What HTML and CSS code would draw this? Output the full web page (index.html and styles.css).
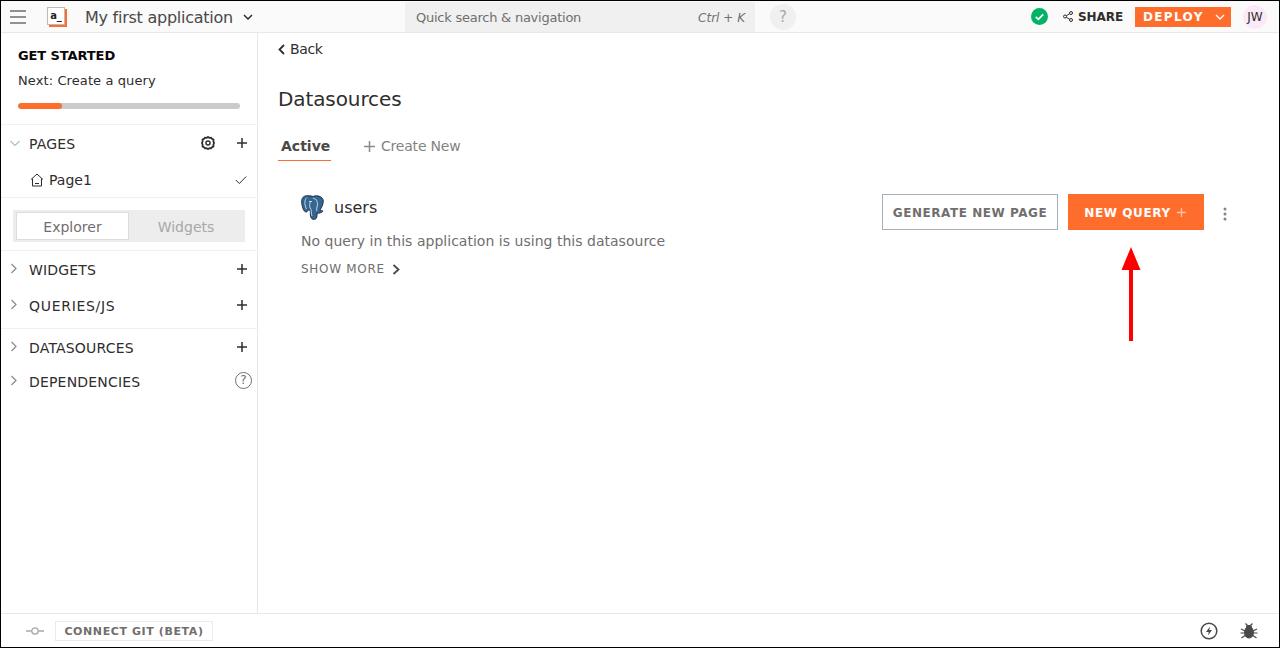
FILE: index.html
```html
<!DOCTYPE html>
<html lang="en">
<head>
<meta charset="utf-8">
<title>Datasources</title>
<link rel="stylesheet" href="styles.css">
</head>
<body>
<div class="frame">
  <header class="topbar">
    <div class="top-left">
      <svg class="burger" width="16" height="14" viewBox="0 0 16 14"><path d="M0 1h16M0 7h16M0 13h16" stroke="#716e6e" stroke-width="1.5" fill="none"/></svg>
      <span class="logo"><span class="logo-box">a_</span></span>
      <span class="app-name">My first application</span>
      <svg class="app-caret" width="10" height="6" viewBox="0 0 10 6"><path d="M1 1l4 4 4-4" stroke="#302d2d" stroke-width="1.5" fill="none"/></svg>
    </div>
    <div class="search"><span>Quick search &amp; navigation</span><em>Ctrl + K</em></div>
    <div class="help">?</div>
    <div class="top-right">
      <svg class="status" width="17" height="17" viewBox="0 0 17 17"><circle cx="8.5" cy="8.5" r="8.5" fill="#03b365"/><path d="M4.8 8.8l2.6 2.5 4.8-5" stroke="#fff" stroke-width="1.8" fill="none"/></svg>
      <svg class="share-icon" width="10" height="11" viewBox="0 0 10 11"><g fill="none" stroke="#302d2d" stroke-width="1"><circle cx="2" cy="5.5" r="1.5"/><circle cx="8" cy="2" r="1.5"/><circle cx="8" cy="9" r="1.5"/><path d="M3.3 4.7l3.4-2M3.3 6.3l3.4 2"/></g></svg>
      <span class="share">SHARE</span>
      <div class="deploy"><span>DEPLOY</span><svg width="10" height="6" viewBox="0 0 10 6"><path d="M1 1l4 4 4-4" stroke="#fff" stroke-width="1.3" fill="none"/></svg></div>
      <div class="avatar">JW</div>
    </div>
  </header>
  <div class="middle">
    <aside class="sidebar">
      <section class="started">
        <div class="started-title">GET STARTED</div>
        <div class="started-next">Next: Create a query</div>
        <div class="progress"><div class="progress-fill"></div></div>
      </section>
      <section class="group pages-group">
        <div class="row pages-row">
          <svg class="caret" width="12" height="12" viewBox="0 0 12 12"><path d="M1.5 4l4.5 4.5L10.500 4" stroke="#8a8a8a" stroke-width="1" fill="none"/></svg>
          <span class="row-label">PAGES</span>
          <svg class="gear" width="14" height="14" viewBox="0 0 14 14"><path d="M7 1l1.400.8 1.600-.2 1 1.300 1.500.7-.2 1.600.7 1.800-.7 1.800.2 1.600-1.500.7-1 1.300-1.600-.2L7 13l-1.400-.8-1.600.2-1-1.300-1.500-.7.2-1.600L1 7l.7-1.800-.2-1.600 1.500-.7 1-1.300 1.600.2z" fill="none" stroke="#302d2d" stroke-width="1.800"/><circle cx="7" cy="7" r="2" fill="none" stroke="#302d2d" stroke-width="1.500"/></svg>
          <svg class="plus" width="10" height="10" viewBox="0 0 10 10"><path d="M5 0v10M0 5h10" stroke="#302d2d" stroke-width="1.500"/></svg>
        </div>
        <div class="row page-row">
          <svg class="home" width="14" height="14" viewBox="0 0 14 14"><path d="M1 6.500L7 1l6 5.500M2.500 5.500V13h9V5.500M5 10.500h4" fill="none" stroke="#302d2d" stroke-width="1"/></svg>
          <span class="row-label">Page1</span>
          <svg class="check" width="12" height="10" viewBox="0 0 12 10"><path d="M.8 5l3.500 3.500L11.200 1.500" stroke="#302d2d" stroke-width="1" fill="none"/></svg>
        </div>
      </section>
      <section class="switch-wrap">
        <div class="switch">
          <div class="switch-tab on">Explorer</div>
          <div class="switch-tab">Widgets</div>
        </div>
      </section>
      <section class="group tree-a">
        <div class="row tree-row">
          <svg class="caret" width="12" height="12" viewBox="0 0 12 12"><path d="M3.500 1L8 5.500 3.500 10" stroke="#8a8a8a" stroke-width="1.200" fill="none"/></svg>
          <span class="row-label">WIDGETS</span>
          <svg class="plus" width="10" height="10" viewBox="0 0 10 10"><path d="M5 0v10M0 5h10" stroke="#302d2d" stroke-width="1.500"/></svg>
        </div>
        <div class="row tree-row">
          <svg class="caret" width="12" height="12" viewBox="0 0 12 12"><path d="M3.500 1L8 5.500 3.500 10" stroke="#8a8a8a" stroke-width="1.200" fill="none"/></svg>
          <span class="row-label label-wide">QUERIES/JS</span>
          <svg class="plus" width="10" height="10" viewBox="0 0 10 10"><path d="M5 0v10M0 5h10" stroke="#302d2d" stroke-width="1.500"/></svg>
        </div>
      </section>
      <section class="tree-b">
        <div class="row tree-row">
          <svg class="caret" width="12" height="12" viewBox="0 0 12 12"><path d="M3.500 1L8 5.500 3.500 10" stroke="#8a8a8a" stroke-width="1.200" fill="none"/></svg>
          <span class="row-label">DATASOURCES</span>
          <svg class="plus" width="10" height="10" viewBox="0 0 10 10"><path d="M5 0v10M0 5h10" stroke="#302d2d" stroke-width="1.500"/></svg>
        </div>
        <div class="row tree-row dep-row">
          <svg class="caret" width="12" height="12" viewBox="0 0 12 12"><path d="M3.500 1L8 5.500 3.500 10" stroke="#8a8a8a" stroke-width="1.200" fill="none"/></svg>
          <span class="row-label">DEPENDENCIES</span>
          <span class="qmark">?</span>
        </div>
      </section>
    </aside>
    <main class="content">
      <div class="back"><svg width="7" height="11" viewBox="0 0 7 11"><path d="M6 1L1.500 5.500 6 10" stroke="#302d2d" stroke-width="1.800" fill="none"/></svg><span>Back</span></div>
      <h1 class="title">Datasources</h1>
      <div class="tabs">
        <div class="tab-active">Active</div>
        <div class="tab-new"><svg width="11" height="11" viewBox="0 0 11 11"><path d="M5.500 0v11M0 5.500h11" stroke="#8a8a8a" stroke-width="1.500"/></svg><span>Create New</span></div>
      </div>
      <div class="card">
        <div class="card-info">
          <div class="card-head">
            <svg class="pg" width="24" height="25" viewBox="0 0 24 25">
              <path d="M6 .8C2.300.8.500 3.300.7 7c.2 3.800 1.500 8.800 3.600 9.800 1.500.7 2.500-.8 3.300-2 .6.500 1.200.8 1.800.8-.2 2.700-.2 5.800.8 7.400.8 1.300 2.800 1.700 4.300 1 1.300-.7 1.600-2.700 1.600-5.700 1.500.2 3.700-.5 5.200-1.500.8-.7.3-1.500-1-1.200-.5 0-1 0-1.500-.2 1.600-2.500 3.500-6.100 3.500-9.200C22.300 3 19 .8 15.500.8c-1.500 0-2.500.2-3.500.7C10.500.8 8 .8 6 .8z" fill="#336791" stroke="#1f3244" stroke-width="1"/>
              <path d="M9.500 6c-1 3-1.500 6 .5 8.500.5 2 .2 5 1 6.500M14.500 4c2 2 2.500 5 1.500 8-.5 1.500-.3 3-.3 4M6 2.500C3.500 4.500 3 9 5.500 14M8 6.500h3M12 3c1 .5 2 1 2.500 1" fill="none" stroke="#e8eef3" stroke-width=".8"/>
            </svg>
            <span class="ds-name">users</span>
          </div>
          <div class="ds-desc">No query in this application is using this datasource</div>
          <div class="show-more"><span>SHOW MORE</span><svg width="8" height="11" viewBox="0 0 8 11"><path d="M1.500 1L6.500 5.500 1.500 10" stroke="#4b4848" stroke-width="1.800" fill="none"/></svg></div>
        </div>
        <div class="card-actions">
          <div class="btn-outline">GENERATE NEW PAGE</div>
          <div class="btn-primary"><span>NEW QUERY</span><svg width="9" height="9" viewBox="0 0 9 9"><path d="M4.500 0v9M0 4.500h9" stroke="#fbc4a8" stroke-width="1.300"/></svg></div>
          <svg class="kebab" width="4" height="14" viewBox="0 0 4 14"><circle cx="2" cy="2" r="1.500" fill="#858282"/><circle cx="2" cy="7" r="1.500" fill="#858282"/><circle cx="2" cy="12" r="1.500" fill="#858282"/></svg>
        </div>
      </div>
      <svg class="arrow" width="20" height="94" viewBox="0 0 20 94"><path d="M10 0l9.500 23H12V94H8V23H.5z" fill="#fe0000"/></svg>
    </main>
  </div>
  <footer class="bottombar">
    <svg class="git" width="18" height="8" viewBox="0 0 18 8"><path d="M0 4h5.500M12.500 4H18" stroke="#a9a7a7" stroke-width="1.500"/><circle cx="9" cy="4" r="3.200" fill="none" stroke="#a9a7a7" stroke-width="1.300"/></svg>
    <div class="connect">CONNECT GIT (BETA)</div>
    <div class="bottom-right">
      <svg width="18" height="18" viewBox="0 0 18 18"><circle cx="9" cy="9" r="7.800" fill="none" stroke="#4b4848" stroke-width="1.500"/><path d="M10 4.500L6 10h2.700L8 13.500 12 8H9.300z" fill="#4b4848"/></svg>
      <svg width="18" height="18" viewBox="0 0 18 18"><ellipse cx="9" cy="10.500" rx="5" ry="6" fill="#4b4848"/><path d="M6 4.500C6 2.500 12 2.500 12 4.500V6H6z" fill="#4b4848"/><path d="M1 7l4 2M17 7l-4 2M.5 11h4M17.500 11h-4M1.500 16l3.500-2.500M16.500 16L13 13.500M5.500 1.500l2 2M12.500 1.500l-2 2" stroke="#4b4848" stroke-width="1.200"/></svg>
    </div>
  </footer>
</div>
</body>
</html>
```
FILE: styles.css
```css
* { box-sizing: border-box; }
html, body { margin: 0; height: 100%; }
body { font-family: "DejaVu Sans", sans-serif; color: #302d2d; background: #fff; overflow: hidden; }
.frame { width: 1280px; height: 648px; border: 1px solid #000; display: flex; flex-direction: column; }

.topbar { height: 32px; flex: none; background: #fafafa; border-bottom: 1px solid #e8e8e8; display: flex; align-items: center; position: relative; }
.top-left { width: 404px; flex: none; display: flex; align-items: center; padding-left: 9px; }
.logo { width: 20px; height: 20px; margin-left: 21px; display: block; background: linear-gradient(#ff6d2d, #ff6d2d) no-repeat 2px 2px / 18px 18px; }
.logo-box { display: block; width: 18px; height: 18px; background: #fff; border: 1px solid #bbb; font-size: 10px; font-weight: 700; line-height: 15px; text-align: center; color: #222; }
.app-name { margin-left: 18px; padding-top: 1px; font-size: 16px; letter-spacing: -.25px; color: #4b4848; white-space: nowrap; }
.app-caret { margin-left: 10px; }
.search { width: 350px; height: 30px; flex: none; background: #f0f0f0; display: flex; align-items: center; justify-content: space-between; padding: 2px 10px 0 11px; font-size: 13px; letter-spacing: -.24px; color: #716e6e; }
.search em { font-size: 12px; letter-spacing: 0; }
.help { width: 26px; height: 26px; margin-left: 15px; flex: none; border-radius: 50%; background: #f0f0f0; color: #a9a7a7; font-size: 15px; text-align: center; line-height: 26px; }
.top-right { margin-left: auto; display: flex; align-items: center; }
.share-icon { margin-left: 15px; }
.share { margin-left: 5px; padding-top: 1px; font-size: 12px; font-weight: 700; color: #302d2d; letter-spacing: -.1px; }
.deploy { margin-left: 12px; width: 96px; height: 20px; background: #ff6d2d; color: #fff; display: flex; align-items: center; justify-content: space-between; padding: 1px 6px 0 8px; font-size: 12px; font-weight: 700; letter-spacing: 1.350px; }
.avatar { width: 24px; height: 24px; margin: 0 12px 0 12px; border-radius: 50%; background: #fbe9f9; color: #302d2d; font-size: 12px; text-align: center; line-height: 24px; }

.middle { flex: 1; display: flex; min-height: 0; }
.sidebar { width: 257px; flex: none; border-right: 1px solid #e8e8e8; display: flex; flex-direction: column; }
.started { height: 92px; padding: 15px 17px 0; border-bottom: 1px solid #f0f0f0; }
.started-title { font-size: 13px; font-weight: 700; letter-spacing: -.1px; color: #090707; line-height: 16px; }
.started-next { font-size: 13px; letter-spacing: .1px; margin-top: 9px; line-height: 16px; color: #302d2d; }
.progress { width: 222px; height: 6px; border-radius: 3px; background: #cbcbcb; margin-top: 14px; overflow: hidden; }
.progress-fill { width: 44px; height: 100%; border-radius: 3px; background: #ff6d2d; }

.group { border-bottom: 1px solid #f0f0f0; }
.row { display: flex; align-items: center; padding: 0 10px 0 8px; }
.row-label { font-size: 14px; letter-spacing: .18px; color: #302d2d; white-space: nowrap; }
.label-wide { letter-spacing: .7px; }
.page-row .row-label { letter-spacing: 0; }
.caret { flex: none; margin-top: -2px; }
.tree-row .caret { margin-left: -1px; margin-right: 1px; }
.pages-group { height: 73px; padding-top: 1px; }
.pages-row { height: 36px; }
.pages-row .row-label, .tree-row .row-label { margin-left: 8px; }
.gear { margin-left: auto; margin-right: 22px; margin-top: -2px; }
.plus { flex: none; margin-left: auto; margin-top: -2px; }
.gear + .plus { margin-left: 0; }
.page-row { height: 36px; padding-left: 29px; }
.page-row .row-label { margin-left: 5px; }
.check { margin-left: auto; margin-right: 0; }

.switch-wrap { height: 53px; padding: 12px 12px 0 12px; border-bottom: 1px solid #f0f0f0; flex: none; }
.switch { display: flex; width: 232px; height: 32px; background: #ededed; padding: 2px 2px 2px 3px; }
.switch-tab { flex: 1; display: flex; align-items: center; justify-content: center; font-size: 14px; color: #a9a7a7; padding-top: 1px; }
.switch-tab.on { flex: none; width: 113px; background: #fff; border: 1px solid #dcdcdc; color: #716e6e; }
.tree-a { height: 78px; flex: none; padding-top: 1px; }
.tree-row { height: 36px; }
.tree-b .tree-row { height: 34px; }
.tree-b { padding-top: 2px; }
.qmark { margin-left: auto; width: 17px; height: 17px; margin-right: -5px; margin-top: -4px; border-radius: 50%; border: 1.500px solid #716e6e; color: #716e6e; font-size: 12px; text-align: center; line-height: 14px; }

.content { flex: 1; min-width: 0; position: relative; padding: 0 20px; }
.back { display: flex; align-items: center; gap: 5px; height: 16px; margin-top: 8px; font-size: 14px; letter-spacing: -.4px; color: #302d2d; }
.title { margin: 30px 0 0; font-size: 20px; font-weight: 400; letter-spacing: -.1px; line-height: 24px; color: #302d2d; }
.tabs { display: flex; margin-top: 23px; height: 30px; }
.tab-active { width: 53px; height: 27px; border-bottom: 1px solid #ff6d2d; padding-left: 3px; font-size: 14px; font-weight: 700; color: #4b4848; line-height: 24px; }
.tab-new { display: flex; align-items: center; gap: 6px; height: 24px; margin-left: 33px; font-size: 14px; letter-spacing: -.2px; color: #858282; }
.card { display: flex; justify-content: space-between; margin-top: 30px; padding-left: 23px; }
.card-head { display: flex; align-items: center; gap: 9px; height: 26px; }
.pg { flex: none; }
.ds-name { font-size: 16px; color: #302d2d; }
.ds-desc { margin-top: 12px; font-size: 14px; letter-spacing: .02px; line-height: 18px; color: #716e6e; }
.show-more { display: flex; align-items: center; gap: 7px; margin-top: 11px; font-size: 12px; letter-spacing: .7px; color: #716e6e; line-height: 16px; }
.card-actions { display: flex; align-items: flex-start; margin-right: 32px; }
.btn-outline { width: 176px; height: 36px; border: 1px solid #a2afb7; padding-top: 1px; font-size: 12px; font-weight: 700; letter-spacing: .55px; color: #716e6e; display: flex; align-items: center; justify-content: center; }
.btn-primary { width: 136px; height: 36px; margin-left: 10px; padding: 1px 2px 0 0; background: #ff6d2d; color: #fff; font-size: 12px; font-weight: 700; letter-spacing: .6px; display: flex; align-items: center; justify-content: center; gap: 6px; }
.kebab { margin: 13px 0 0 19px; }
.arrow { position: absolute; left: 863px; top: 214px; }

.bottombar { height: 34px; flex: none; border-top: 1px solid #e8e8e8; display: flex; align-items: center; padding-left: 25px; }
.connect { margin-left: 11px; height: 20px; width: 158px; border: 1px solid #ebebeb; padding-top: 1px; font-size: 11px; font-weight: 700; letter-spacing: .6px; color: #716e6e; display: flex; align-items: center; justify-content: center; }
.bottom-right { margin-left: auto; display: flex; align-items: center; gap: 22px; margin-right: 21px; }
```
